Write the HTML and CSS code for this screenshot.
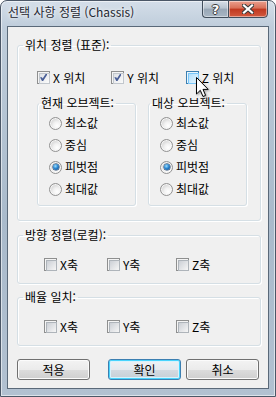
FILE: index.html
```html
<!DOCTYPE html>
<html lang="ko">
<head>
  <meta charset="UTF-8" />
  <title>선택 사항 정렬 (Chassis)</title>
  <link rel="stylesheet" href="styles.css">
</head>
<body>
  <div class="window">
    <div class="titlebar">
      <div class="title">선택 사항 정렬 (Chassis)</div>
      <div class="caption-btns">
        <button class="cap help"><span>?</span></button>
        <button class="cap close">
          <svg width="12" height="10" viewBox="0 0 12 10">
            <path d="M2,1.5 L10,8.5 M10,1.5 L2,8.5" stroke="#3b3b3b" stroke-width="4.2" stroke-linecap="square"/>
            <path d="M2,1.5 L10,8.5 M10,1.5 L2,8.5" stroke="#fff" stroke-width="2.2" stroke-linecap="square"/>
          </svg>
        </button>
      </div>
    </div>

    <div class="client">
      <fieldset class="group g-pos">
        <legend>위치 정렬 (표준):</legend>
        <div class="check-row">
          <label class="check on"><span class="box"></span>X 위치</label>
          <label class="check on"><span class="box"></span>Y 위치</label>
          <label class="check hover"><span class="box"></span>Z 위치</label>
        </div>
        <div class="subs">
          <fieldset class="sub">
            <legend>현재 오브젝트:</legend>
            <div class="radios">
              <label class="radio-item"><span class="radio"></span>최소값</label>
              <label class="radio-item"><span class="radio"></span>중심</label>
              <label class="radio-item"><span class="radio on"></span>피벗점</label>
              <label class="radio-item"><span class="radio"></span>최대값</label>
            </div>
          </fieldset>
          <fieldset class="sub">
            <legend>대상 오브젝트:</legend>
            <div class="radios">
              <label class="radio-item"><span class="radio"></span>최소값</label>
              <label class="radio-item"><span class="radio"></span>중심</label>
              <label class="radio-item"><span class="radio on"></span>피벗점</label>
              <label class="radio-item"><span class="radio"></span>최대값</label>
            </div>
          </fieldset>
        </div>
      </fieldset>

      <fieldset class="group g-axis g-orient">
        <legend>방향 정렬(로컬):</legend>
        <div class="axis-row">
          <label class="check"><span class="box"></span>X축</label>
          <label class="check"><span class="box"></span>Y축</label>
          <label class="check"><span class="box"></span>Z축</label>
        </div>
      </fieldset>

      <fieldset class="group g-axis g-scale">
        <legend>배율 일치:</legend>
        <div class="axis-row">
          <label class="check"><span class="box"></span>X축</label>
          <label class="check"><span class="box"></span>Y축</label>
          <label class="check"><span class="box"></span>Z축</label>
        </div>
      </fieldset>

      <div class="buttons">
        <button class="btn">적용</button>
        <button class="btn default">확인</button>
        <button class="btn">취소</button>
      </div>
    </div>

    <svg class="cursor" width="14" height="22" viewBox="0 0 14 22">
      <path d="M0.5,0.5 V17 L4.3,13.3 L7,19.5 L9.6,18.4 L7,12.4 H12.2 Z" fill="#fff" stroke="#000" stroke-width="1" stroke-linejoin="miter"/>
    </svg>
  </div>
</body>
</html>
```

FILE: styles.css
```css
* { margin: 0; padding: 0; box-sizing: border-box; }
html, body { width: 276px; height: 397px; overflow: hidden; }
body {
  font-family: "Noto Sans CJK KR", "Noto Sans", sans-serif;
  font-size: 12px;
  line-height: 14px;
  color: #000;
  background: #fff;
}

/* window frame */
.window {
  position: relative;
  width: 276px;
  height: 397px;
  padding: 0 6px;
  border: 1px solid #4b5767;
  border-radius: 7px 7px 0 0;
  background: linear-gradient(#d4dee9, #bfcddb 26px, #a9bacb 55%, #b2c1d1);
  box-shadow: inset 0 0 0 1px rgba(255, 255, 255, 0.55);
}
.titlebar {
  height: 25px;
  display: flex;
  justify-content: space-between;
}
.title {
  padding: 4px 0 0 1px;
  font-size: 12px;
  color: #1e2630;
  text-shadow: 0 0 6px rgba(255, 255, 255, 0.9), 0 0 3px rgba(255, 255, 255, 0.9);
}
.caption-btns {
  display: flex;
  height: 18px;
  margin: -1px 1px 0 0;
}
.cap {
  height: 18px;
  border: 1px solid #414e5c;
  display: flex;
  align-items: center;
  justify-content: center;
  box-shadow: inset 0 0 0 1px rgba(255, 255, 255, 0.45);
}
.help {
  width: 26px;
  border-right: none;
  border-radius: 0 0 0 4px;
  background: linear-gradient(#d7dfe7, #b7c3cf 45%, #98a7b6 50%, #a8b6c4);
}
.help span {
  font-family: "DejaVu Sans", sans-serif;
  font-weight: bold;
  font-size: 13px;
  line-height: 13px;
  color: #fff;
  text-shadow: 1px 0 #3b3b3b, -1px 0 #3b3b3b, 0 1px #3b3b3b, 0 -1px #3b3b3b;
}
.close {
  width: 40px;
  border-radius: 0 0 4px 0;
  background: linear-gradient(#eba08e, #d86f57 45%, #c0381f 50%, #d25a3f);
}

/* client area */
.client {
  height: 363px;
  border: 1px solid #5a6979;
  background: #f0f0f0;
  padding: 11px 0 0 9px;
}
.group, .sub {
  min-width: 0;
  border: 1px solid #d5dfe5;
  border-radius: 3px;
  box-shadow: inset 1px 1px 0 #fff, 1px 1px 0 #fff;
}
.group { width: 244px; }
.group legend {
  margin-left: 5px;
  padding: 0 2px;
  line-height: 14px;
}
.g-pos { padding-bottom: 14px; }
.g-orient { margin-top: 7px; }
.g-scale { margin-top: 6px; }
.g-axis { padding: 16px 0 12px 0; }

.check-row {
  display: flex;
  height: 13px;
  margin-top: 19px;
  padding-left: 19px;
}
.check-row .check { width: 76px; }
.axis-row { display: flex; height: 13px; padding-left: 26px; }
.axis-row .check:nth-child(1) { width: 63px; }
.axis-row .check:nth-child(2) { width: 69px; }

.check, .radio-item {
  display: flex;
  align-items: center;
  gap: 3px;
  height: 13px;
  line-height: 13px;
}

/* checkbox */
.box {
  position: relative;
  flex: none;
  width: 13px;
  height: 13px;
  border: 1px solid #8e8f8f;
  background: #f4f4f4;
  padding: 1px;
}
.box::before {
  content: '';
  display: block;
  width: 9px;
  height: 9px;
  border: 1px solid #aeb4ba;
  background: linear-gradient(135deg, #cbcfd5, #f6f6f6);
}
.check.on .box::before {
  border-color: #c2c7cd;
  background: linear-gradient(135deg, #dfe2e6, #fbfbfb);
}
.check.on .box::after {
  content: '';
  position: absolute;
  left: 2px;
  top: 2px;
  width: 7px;
  height: 7px;
  background: #4a5f97;
  clip-path: polygon(0 45%, 28% 45%, 38% 65%, 80% 0, 100% 0, 100% 14%, 45% 100%, 28% 100%);
}
.check.hover .box { border-color: #3c7fb1; background: #e9f6fd; }
.check.hover .box::before {
  border-color: #79c6f9;
  background: linear-gradient(135deg, #b1dffd, #e9f7fe);
}

/* subgroups */
.subs {
  display: flex;
  gap: 12px;
  margin-top: 12px;
  padding-left: 19px;
}
.sub { width: 99px; }
.sub legend {
  margin-left: 1px;
  padding: 0 2px;
  line-height: 14px;
}
.radios {
  display: flex;
  flex-direction: column;
  gap: 8px;
  padding: 6px 0 9px 11px;
}
.radio-item { height: 14px; line-height: 14px; }
.radio {
  position: relative;
  flex: none;
  width: 13px;
  height: 13px;
  border-radius: 50%;
  border: 1px solid #929292;
  background: radial-gradient(circle at 65% 70%, #ffffff 0, #f2f2f2 35%, #cfcfcf 80%);
  box-shadow: inset 0 0 0 1px #f6f6f6;
}
.radio.on::after {
  content: '';
  position: absolute;
  left: 2.5px;
  top: 2.5px;
  width: 6px;
  height: 6px;
  border-radius: 50%;
  background: radial-gradient(circle at 40% 35%, #9fe0ff 0, #2a86d0 45%, #0d3f7a 100%);
  box-shadow: 0 0 0 0.5px #14365f;
}

/* dialog buttons */
.buttons {
  display: flex;
  margin-top: 13px;
}
.btn {
  width: 73px;
  height: 21px;
  border: 1px solid #707070;
  border-radius: 3px;
  background: linear-gradient(#f3f3f3 0, #ebebeb 50%, #dddddd 50%, #cfcfcf 100%);
  box-shadow: inset 0 0 0 1px #fbfbfb;
  font: inherit;
  line-height: 17px;
  color: #000;
}
.btn + .btn { margin-left: 18px; }
.btn + .btn + .btn { margin-left: 5px; }
.btn.default {
  border-color: #3c7fb1;
  box-shadow: inset 0 0 0 1px #48d4fd, inset 0 0 0 2px #d8f2fc;
  background: linear-gradient(#eef2f5 0, #e4e9ee 50%, #d4dbe2 50%, #c6ced6 100%);
}

.cursor {
  position: absolute;
  left: 195px;
  top: 76px;
  filter: drop-shadow(1px 1px 1px rgba(0, 0, 0, 0.35));
}
```
